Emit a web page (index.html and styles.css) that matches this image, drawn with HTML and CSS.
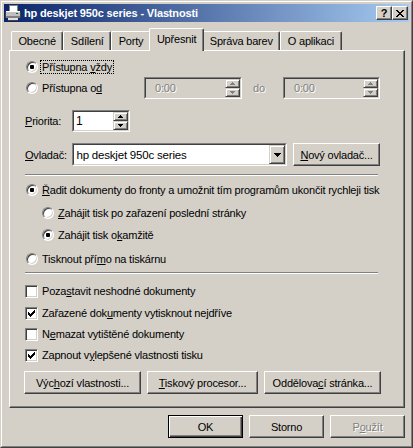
FILE: index.html
```html
<!DOCTYPE html>
<html lang="cs">
<head>
<meta charset="utf-8">
<title>hp deskjet 950c series - Vlastnosti</title>
<link rel="stylesheet" href="styles.css">
</head>
<body>
<div class="window">
  <div class="frame">
    <div class="titlebar">
      <svg class="app-icon" width="16" height="16" viewBox="0 0 16 16" shape-rendering="crispEdges">
        <rect x="4" y="0" width="8" height="6" fill="#fff" stroke="#808080" stroke-width="1"/>
        <rect x="1" y="6" width="14" height="7" fill="#c0c0c0"/>
        <rect x="1" y="6" width="14" height="1" fill="#fff"/>
        <rect x="1" y="11" width="14" height="2" fill="#808080"/>
        <rect x="0" y="7" width="1" height="6" fill="#404040"/>
        <rect x="15" y="7" width="1" height="6" fill="#404040"/>
        <rect x="3" y="13" width="10" height="2" fill="#e0e0e0"/>
        <rect x="3" y="15" width="10" height="1" fill="#404040"/>
        <rect x="11" y="8" width="2" height="1" fill="#008000"/>
      </svg>
      <span class="title">hp deskjet 950c series - Vlastnosti</span>
      <div class="caption-btns">
        <div class="cap-btn"><span class="cap-q">?</span></div>
        <div class="cap-btn">
          <svg width="8" height="7" viewBox="0 0 8 7" shape-rendering="crispEdges">
            <path d="M0 0h2v1h-2zM6 0h2v1h-2zM1 1h2v1h-2zM5 1h2v1h-2zM2 2h4v1h-4zM3 3h2v1h-2zM2 4h4v1h-4zM1 5h2v1h-2zM5 5h2v1h-2zM0 6h2v1h-2zM6 6h2v1h-2z" fill="#000"/>
          </svg>
        </div>
      </div>
    </div>

    <div class="client">
      <div class="tabs">
        <div class="tab">Obecné</div>
        <div class="tab">Sdílení</div>
        <div class="tab">Porty</div>
        <div class="tab selected">Upřesnit</div>
        <div class="tab">Správa barev</div>
        <div class="tab">O aplikaci</div>
      </div>

      <div class="panel">
        <div class="row r-first">
          <span class="radio checked"></span><span class="lbl focus">Přístupna <u>v</u>ždy</span>
        </div>

        <div class="row r-avail">
          <div class="avail-label"><span class="radio"></span><span class="lbl">Přístupna o<u>d</u></span></div>
          <div class="sunken spin spin-time">
            <div class="sunken-in disabled-field">
              <span class="spin-val disabled-text">0:00</span>
              <div class="spin-btns">
                <div class="spin-btn"><svg class="arr" width="5" height="3" viewBox="0 0 5 3" shape-rendering="crispEdges"><path d="M2 0h1v1h-1zM1 1h3v1h-3zM0 2h5v1h-5z" fill="#808080"/></svg></div>
                <div class="spin-btn"><svg class="arr" width="5" height="3" viewBox="0 0 5 3" shape-rendering="crispEdges"><path d="M0 0h5v1h-5zM1 1h3v1h-3zM2 2h1v1h-1z" fill="#808080"/></svg></div>
              </div>
            </div>
          </div>
          <span class="do-lbl disabled-text">do</span>
          <div class="sunken spin spin-time spin-end">
            <div class="sunken-in disabled-field">
              <span class="spin-val disabled-text">0:00</span>
              <div class="spin-btns">
                <div class="spin-btn"><svg class="arr" width="5" height="3" viewBox="0 0 5 3" shape-rendering="crispEdges"><path d="M2 0h1v1h-1zM1 1h3v1h-3zM0 2h5v1h-5z" fill="#808080"/></svg></div>
                <div class="spin-btn"><svg class="arr" width="5" height="3" viewBox="0 0 5 3" shape-rendering="crispEdges"><path d="M0 0h5v1h-5zM1 1h3v1h-3zM2 2h1v1h-1z" fill="#808080"/></svg></div>
              </div>
            </div>
          </div>
        </div>

        <div class="row r-prio">
          <span class="field-lbl prio-lbl"><u>P</u>riorita:</span>
          <div class="sunken spin spin-prio">
            <div class="sunken-in">
              <span class="spin-val prio-val">1</span>
              <div class="spin-btns">
                <div class="spin-btn"><svg class="arr" width="5" height="3" viewBox="0 0 5 3" shape-rendering="crispEdges"><path d="M2 0h1v1h-1zM1 1h3v1h-3zM0 2h5v1h-5z" fill="#000"/></svg></div>
                <div class="spin-btn"><svg class="arr" width="5" height="3" viewBox="0 0 5 3" shape-rendering="crispEdges"><path d="M0 0h5v1h-5zM1 1h3v1h-3zM2 2h1v1h-1z" fill="#000"/></svg></div>
              </div>
            </div>
          </div>
        </div>

        <div class="row r-driver">
          <span class="field-lbl drv-lbl"><u>O</u>vladač:</span>
          <div class="sunken combo">
            <div class="sunken-in">
              <span class="combo-val">hp deskjet 950c series</span>
              <div class="combo-btn"><svg width="7" height="4" viewBox="0 0 7 4" shape-rendering="crispEdges"><path d="M0 0h7v1h-7zM1 1h5v1h-5zM2 2h3v1h-3zM3 3h1v1h-1z" fill="#000"/></svg></div>
            </div>
          </div>
          <div class="btn btn-new"><span><u>N</u>ový ovladač...</span></div>
        </div>

        <div class="sep sep-1"></div>

        <div class="row r-opt r-spool">
          <span class="radio checked"></span><span class="lbl"><u>Ř</u>adit dokumenty do fronty a umožnit tím programům ukončit rychleji tisk</span>
        </div>
        <div class="row r-opt r-sub1 indent">
          <span class="radio"></span><span class="lbl"><u>Z</u>ahájit tisk po zařazení poslední stránky</span>
        </div>
        <div class="row r-opt r-sub2 indent">
          <span class="radio checked"></span><span class="lbl">Zahájit tisk o<u>k</u>amžitě</span>
        </div>
        <div class="row r-opt r-direct">
          <span class="radio"></span><span class="lbl">Tisknout pří<u>m</u>o na tiskárnu</span>
        </div>

        <div class="sep sep-2"></div>

        <div class="row r-opt r-c1">
          <span class="check"></span><span class="lbl">Poza<u>s</u>tavit neshodné dokumenty</span>
        </div>
        <div class="row r-opt r-c2">
          <span class="check checked"><svg width="7" height="7" viewBox="0 0 7 7" shape-rendering="crispEdges"><path d="M6 0h1v3h-1zM5 1h1v3h-1zM4 2h1v3h-1zM0 2h1v3h-1zM1 3h1v3h-1zM3 3h1v3h-1zM2 4h1v3h-1z" fill="#000"/></svg></span><span class="lbl">Zařazené dok<u>u</u>menty vytisknout nejdříve</span>
        </div>
        <div class="row r-opt r-c3">
          <span class="check"></span><span class="lbl">N<u>e</u>mazat vytištěné dokumenty</span>
        </div>
        <div class="row r-opt r-c3">
          <span class="check checked"><svg width="7" height="7" viewBox="0 0 7 7" shape-rendering="crispEdges"><path d="M6 0h1v3h-1zM5 1h1v3h-1zM4 2h1v3h-1zM0 2h1v3h-1zM1 3h1v3h-1zM3 3h1v3h-1zM2 4h1v3h-1z" fill="#000"/></svg></span><span class="lbl">Zapnout v<u>y</u>lepšené vlastnosti tisku</span>
        </div>

        <div class="row r-buttons">
          <div class="btn btn-wide"><span>Výc<u>h</u>ozí vlastnosti...</span></div>
          <div class="btn btn-mid"><span><u>T</u>iskový procesor...</span></div>
          <div class="btn btn-wide2"><span>Oddělova<u>c</u>í stránka...</span></div>
        </div>
      </div>

      <div class="footer">
        <div class="btn btn-dlg btn-default"><span>OK</span></div>
        <div class="btn btn-dlg"><span>Storno</span></div>
        <div class="btn btn-dlg"><span class="disabled-text">P<u>o</u>užít</span></div>
      </div>
    </div>
  </div>
</div>
</body>
</html>
```

FILE: styles.css
```css
* { box-sizing: border-box; }

html, body {
  margin: 0;
  padding: 0;
}

body {
  width: 413px;
  height: 448px;
  background: #d4d0c8;
  font-family: "Liberation Sans", Arial, sans-serif;
  font-size: 11px;
  letter-spacing: -0.2px;
  color: #000;
  overflow: hidden;
}

u { text-decoration: underline; text-underline-offset: 1px; }

.window {
  width: 413px;
  height: 448px;
  border: 1px solid;
  border-color: #d4d0c8 #404040 #404040 #d4d0c8;
}

.frame {
  height: 100%;
  border: 1px solid;
  border-color: #fff #808080 #808080 #fff;
  padding: 2px;
  display: flex;
  flex-direction: column;
}

/* ---------- title bar ---------- */
.titlebar {
  height: 18px;
  flex: 0 0 18px;
  background: linear-gradient(to right, #0a246a, #a6caf0);
  display: flex;
  align-items: center;
  padding: 0 1px 0 1px;
}

.app-icon { flex: 0 0 16px; }

.title {
  margin-left: 3px;
  color: #fff;
  font-weight: bold;
  font-size: 11px;
  letter-spacing: -0.15px;
  white-space: nowrap;
}

.caption-btns {
  margin-left: auto;
  display: flex;
}

.cap-btn {
  width: 16px;
  height: 14px;
  background: #d4d0c8;
  border: 1px solid;
  border-color: #fff #404040 #404040 #fff;
  box-shadow: inset -1px -1px #808080;
  display: flex;
  align-items: center;
  justify-content: center;
}

.cap-q {
  font-weight: bold;
  font-size: 11px;
  line-height: 11px;
  margin-top: 1px;
}

/* ---------- client ---------- */
.client {
  flex: 1;
  padding: 6px 4px 0 5px;
  display: flex;
  flex-direction: column;
}

.tabs {
  height: 22px;
  display: flex;
  align-items: flex-end;
  padding-left: 2px;
}

.tab {
  height: 19px;
  padding: 0 6.5px 1px;
  display: flex;
  align-items: center;
  border-top: 1px solid #fff;
  border-left: 1px solid #fff;
  border-right: 1px solid #404040;
  border-radius: 2px 2px 0 0;
  box-shadow: inset -1px 0 #808080;
  white-space: nowrap;
  background: #d4d0c8;
}

.tab.selected {
  height: 23px;
  margin: 0 -2px -1px;
  padding: 0 7px 3px;
  position: relative;
  z-index: 1;
}

.panel {
  height: 358px;
  border: 1px solid;
  border-color: #fff #404040 #404040 #fff;
  box-shadow: inset -1px -1px #808080;
  padding: 6px 24px 0 15px;
  display: flex;
  flex-direction: column;
}

.row {
  display: flex;
  align-items: center;
  flex: 0 0 auto;
}

.r-first { height: 20px; }
.r-avail { height: 22px; }
.r-prio { height: 22px; margin-top: 11px; }
.r-driver { height: 23px; margin-top: 11px; }

.r-opt { height: 20px; }
.r-spool { margin-top: 4px; }
.r-sub1 { margin-top: 3px; }
.r-sub2 { margin-top: 2px; }
.r-direct { margin-top: 4px; }
.r-c1 { margin-top: 7px; }
.r-c2 { margin-top: 2px; }
.r-c3 { margin-top: 1px; }

.r-buttons {
  height: 23px;
  margin-top: 6px;
  margin-left: -1px;
  gap: 6px;
}

.indent { padding-left: 16px; }

.sep {
  height: 2px;
  border-top: 1px solid #808080;
  border-bottom: 1px solid #fff;
  margin-right: 2px;
}
.sep-1 { margin-top: 8px; }
.sep-2 { margin-top: 3px; }

/* ---------- radio & check ---------- */
.radio {
  flex: 0 0 12px;
  width: 12px;
  height: 12px;
  margin-left: 1px;
  margin-right: 2px;
  border-radius: 50%;
  background: #fff;
  border: 1px solid;
  border-color: #808080 #fff #fff #808080;
  box-shadow: inset 1px 1px #404040, inset -1px -1px #d4d0c8;
  display: flex;
  align-items: center;
  justify-content: center;
}

.radio.checked::after {
  content: "";
  width: 4px;
  height: 4px;
  border-radius: 1px;
  background: #000;
}

.check {
  flex: 0 0 13px;
  width: 13px;
  height: 13px;
  margin-right: 2px;
  background: #fff;
  border: 1px solid;
  border-color: #808080 #fff #fff #808080;
  box-shadow: inset 1px 1px #404040, inset -1px -1px #d4d0c8;
  display: flex;
  align-items: center;
  justify-content: center;
}

.lbl {
  padding: 0 1px;
  border: 1px dotted transparent;
  white-space: nowrap;
}

.lbl.focus { border-color: #000; }

/* ---------- fields ---------- */
.sunken {
  border: 1px solid;
  border-color: #808080 #fff #fff #808080;
  height: 100%;
}

.sunken-in {
  height: 100%;
  border: 1px solid;
  border-color: #404040 #d4d0c8 #d4d0c8 #404040;
  background: #fff;
  display: flex;
  align-items: stretch;
}

.disabled-field { background: #d4d0c8; }

.disabled-text {
  color: #808080;
  text-shadow: 1px 1px 0 #fff;
}

.avail-label {
  width: 119px;
  display: flex;
  align-items: center;
}

.spin-time { width: 98px; }
.spin-end { margin-left: auto; width: 97px; }

.do-lbl { margin-left: 11px; }

.spin-val {
  flex: 1;
  display: flex;
  align-items: center;
  padding-left: 9px;
}

.prio-val { padding-left: 2px; font-size: 12px; }

.spin-btns {
  width: 15px;
  display: flex;
  flex-direction: column;
}

.spin-btn {
  flex: 1;
  border: 1px solid;
  border-color: #d4d0c8 #404040 #404040 #d4d0c8;
  box-shadow: inset 1px 1px #fff, inset -1px -1px #808080;
  background: #d4d0c8;
  display: flex;
  align-items: center;
  justify-content: center;
}

.field-lbl { white-space: nowrap; }
.prio-lbl { width: 47px; }
.drv-lbl { width: 48px; }

.spin-prio { width: 58px; }

.combo { width: 217px; }

.combo-val {
  flex: 1;
  display: flex;
  align-items: center;
  padding-left: 2px;
  font-size: 11.5px;
}

.combo-btn {
  width: 16px;
  border: 1px solid;
  border-color: #d4d0c8 #404040 #404040 #d4d0c8;
  box-shadow: inset 1px 1px #fff, inset -1px -1px #808080;
  background: #d4d0c8;
  display: flex;
  align-items: center;
  justify-content: center;
}

/* ---------- buttons ---------- */
.btn {
  height: 23px;
  flex: 0 0 auto;
  border: 1px solid;
  border-color: #fff #404040 #404040 #fff;
  box-shadow: inset -1px -1px #808080;
  display: flex;
  align-items: center;
  justify-content: center;
  white-space: nowrap;
  background: #d4d0c8;
}

.btn-default {
  border-color: #000;
  box-shadow: inset 1px 1px #fff, inset -1px -1px #404040, inset -2px -2px #808080;
}

.btn-new { width: 87px; margin-left: 6px; }
.btn-wide { width: 117px; }
.btn-mid { width: 111px; }
.btn-wide2 { width: 117px; }

.footer {
  margin-top: 7px;
  display: flex;
  justify-content: flex-end;
  gap: 6px;
}

.btn-dlg { width: 75px; }
```
